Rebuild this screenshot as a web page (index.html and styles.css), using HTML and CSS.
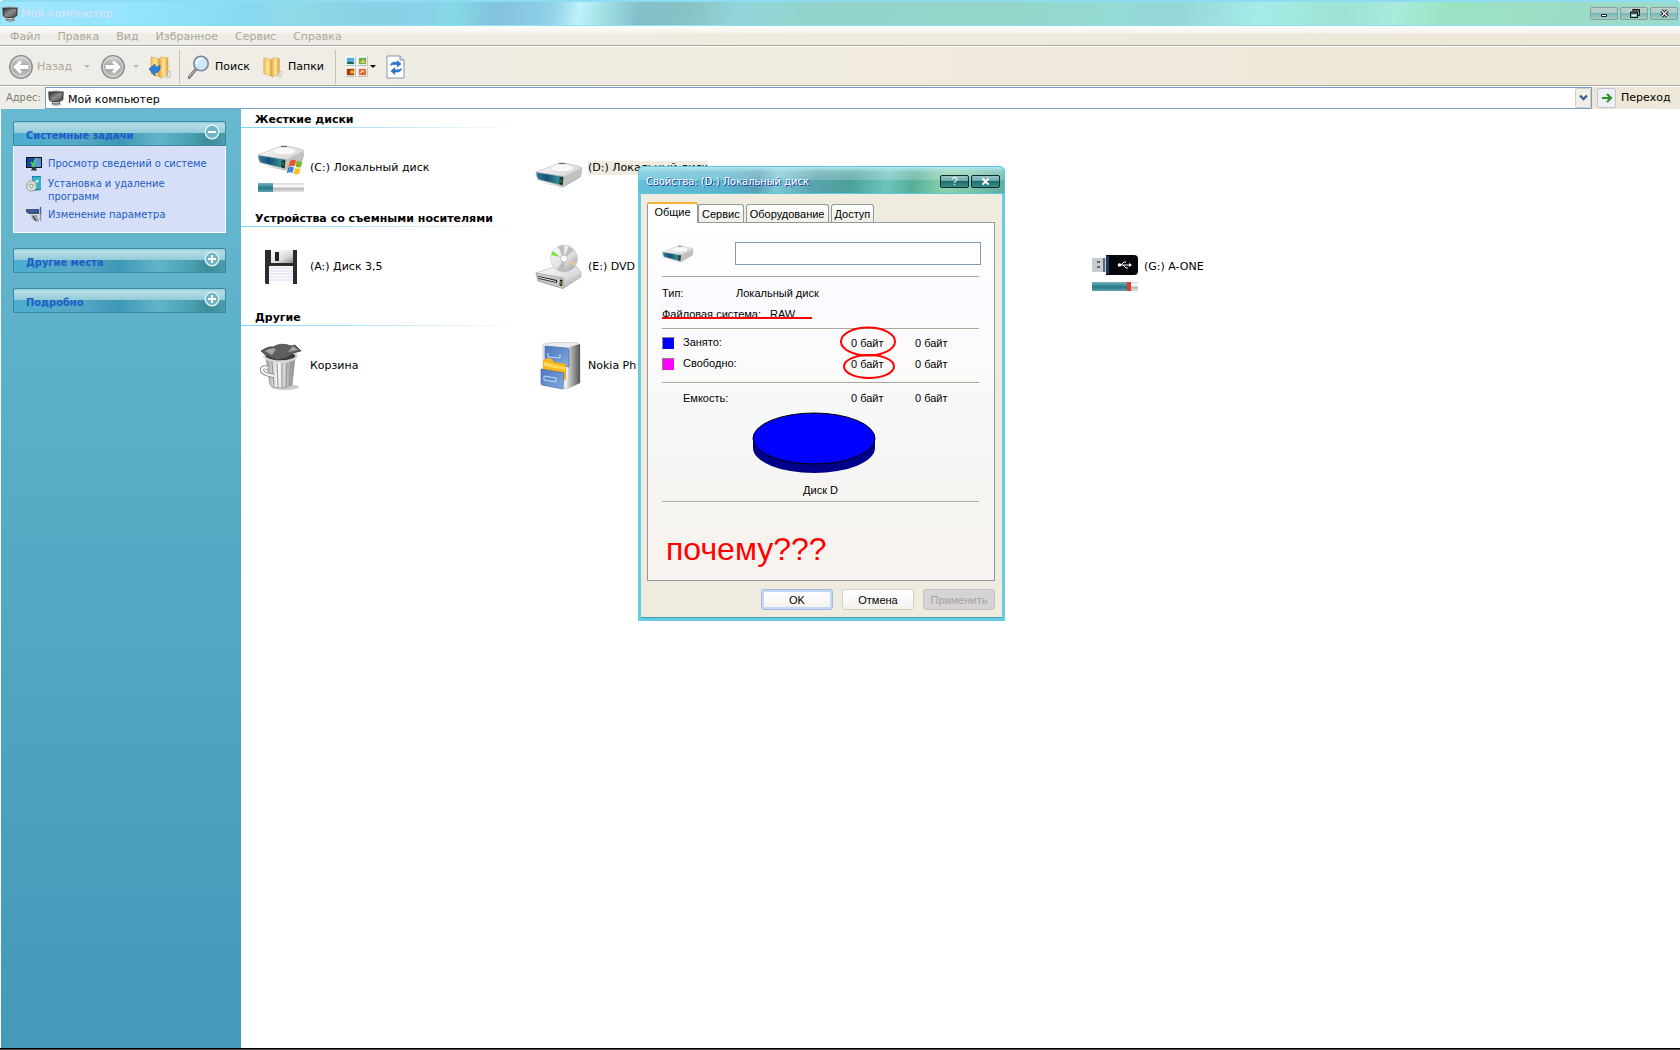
FILE: index.html
```html
<!DOCTYPE html>
<html lang="ru">
<head>
<meta charset="utf-8">
<title>Мой компьютер</title>
<link rel="stylesheet" href="styles.css">
</head>
<body>
<svg class="defs" aria-hidden="true">
  <defs>
    <linearGradient id="metal" x1="0" y1="0" x2="1" y2="1"><stop offset="0" stop-color="#fff"/><stop offset=".6" stop-color="#dcdcdc"/><stop offset="1" stop-color="#8e8e8e"/></linearGradient>
    <linearGradient id="front" x1="0" y1="0" x2="1" y2="0"><stop offset="0" stop-color="#2e7f96"/><stop offset=".4" stop-color="#174f78"/><stop offset=".8" stop-color="#2f8f90"/><stop offset="1" stop-color="#123"/></linearGradient>
    <linearGradient id="gold" x1="0" y1="0" x2="1" y2="0"><stop offset="0" stop-color="#f0bc55"/><stop offset=".5" stop-color="#fde59a"/><stop offset="1" stop-color="#dda239"/></linearGradient>
    <linearGradient id="grayball" x1="0" y1="0" x2="0" y2="1"><stop offset="0" stop-color="#d8d8d8"/><stop offset=".5" stop-color="#a2a2a2"/><stop offset="1" stop-color="#c4c4c4"/></linearGradient>
    <linearGradient id="dark" x1="0" y1="0" x2="1" y2="1"><stop offset="0" stop-color="#2c2c2c"/><stop offset=".5" stop-color="#8c8c8c"/><stop offset="1" stop-color="#3c3c3c"/></linearGradient>
    <linearGradient id="blue" x1="0" y1="0" x2="1" y2="1"><stop offset="0" stop-color="#4a76bd"/><stop offset="1" stop-color="#86abdf"/></linearGradient>
    <linearGradient id="side" x1="0" y1="0" x2="1" y2="0"><stop offset="0" stop-color="#ddd"/><stop offset="1" stop-color="#555"/></linearGradient>
    <linearGradient id="can" x1="0" y1="0" x2="1" y2="0"><stop offset="0" stop-color="#9a9a9a"/><stop offset=".4" stop-color="#fff"/><stop offset="1" stop-color="#8a8a8a"/></linearGradient>
    <symbol id="pc" viewBox="0 0 16 16"><path d="M.5 1.500q7-1 15 0L15 10 11.500 12 12.500 14.500 8 15.500 4 14.500 4.500 12.500 1 10.500z" fill="#c9c9c9" stroke="#777" stroke-width=".6"/><path d="M1 2.500q7-1 14 0L14.500 9.500 11 11.500H4.500L1.500 9.500z" fill="url(#dark)" stroke="#222" stroke-width=".8"/><path d="M4 13.500q4 1 8 0" stroke="#666" fill="none"/></symbol>
    <symbol id="drive" viewBox="0 0 48 28"><path d="M4 21l24 5.500L46 16v-3L26 25z" fill="#777" opacity=".5"/><path d="M1 11L22 3Q26 1 30 2L45 5.500Q47 6 46.500 8V13L28 25 3 18.500z" fill="url(#metal)" stroke="#b5b5b5" stroke-width=".6"/><path d="M1 11L29 15.500 28 25 3 18.500Q1 15 1 11z" fill="url(#front)" stroke="#ccc" stroke-width=".8"/><path d="M25 17l2.500.5-.5 6-2.500-.6z" fill="#111"/><path d="M26 18v4" stroke="#7be04a" stroke-width=".8"/><path d="M29 15.500L46.500 7v6L28 25z" fill="#c2c2c2"/><ellipse cx="27" cy="7" rx="12" ry="4" fill="#f8f8f8" stroke="#d2d2d2" stroke-width=".7"/><path d="M24 2.500h6" stroke="#666"/></symbol>
    <symbol id="ball" viewBox="0 0 24 24"><circle cx="12" cy="12" r="11.300" fill="url(#grayball)" stroke="#8b8b8b" stroke-width="1.200"/><circle cx="12" cy="12" r="9.500" fill="none" stroke="#dedede"/><path d="M4 12l7-6.500 2 2L10.500 10H19.500v4H10.500L13 16.500l-2 2z" fill="#fff"/></symbol>
    <symbol id="folder" viewBox="0 0 24 24"><path d="M3 2l9 2v18l-9-3z" fill="url(#gold)" stroke="#d5a444" stroke-width=".6"/><path d="M12 4l1-2 7 1v17l-8 3z" fill="url(#gold)" stroke="#d5a444" stroke-width=".6"/><path d="M20 16l3 1-1 5-3 1z" fill="#e8e8e0" stroke="#aaa" stroke-width=".6"/></symbol>
    <symbol id="plus" viewBox="0 0 16 16"><circle cx="8" cy="8" r="6.800" fill="#70b4c6" stroke="#e4f5f8" stroke-width="1.300"/><path d="M4 8h8M8 4v8" stroke="#fff" stroke-width="2"/></symbol>
    <symbol id="minus" viewBox="0 0 16 16"><circle cx="8" cy="8" r="6.800" fill="#70b4c6" stroke="#e4f5f8" stroke-width="1.300"/><path d="M4 8h8" stroke="#fff" stroke-width="2"/></symbol>
  </defs>
</svg>

<header class="titlebar">
  <svg class="i16"><use href="#pc"/></svg>
  <h1 class="titlebar-text">Мой компьютер</h1>
  <div class="winbtns">
    <button class="winbtn" aria-label="Свернуть"><svg width="13" height="11"><path d="M3.500 6.500h5v2h-5z" fill="#fff" stroke="#222"/></svg></button>
    <button class="winbtn" aria-label="Восстановить"><svg width="13" height="11"><path d="M4.500 2.500v-1h7v6h-2M2.500 4h7v5.500h-7zM2.500 5h7M4.500 3h7" fill="none" stroke="#111"/><path d="M4 7.500h4" stroke="#fff"/></svg></button>
    <button class="winbtn" aria-label="Закрыть"><svg width="13" height="11"><path d="M3.500 2.500l6 6M9.500 2.500l-6 6" stroke="#222" stroke-width="3.400"/><path d="M3.500 2.500l6 6M9.500 2.500l-6 6" stroke="#fff" stroke-width="1.200"/></svg></button>
  </div>
</header>

<nav class="menubar">
  <button>Файл</button><button>Правка</button><button>Вид</button><button>Избранное</button><button>Сервис</button><button>Справка</button>
</nav>

<div class="toolbar">
  <button class="tool back" disabled><svg class="i24"><use href="#ball"/></svg>Назад</button>
  <button class="drop drop-wide" disabled aria-label="Журнал назад"><span class="tri"></span></button>
  <button class="tool" disabled aria-label="Вперед"><svg class="i24 flip"><use href="#ball"/></svg></button>
  <button class="drop drop-mid" disabled aria-label="Журнал вперед"><span class="tri"></span></button>
  <button class="tool" aria-label="Вверх"><svg class="i24" viewBox="0 0 24 24"><use href="#folder" x="1" width="24" height="24"/><path d="M2 14l6-5v3q4 0 5-2 1 7-5 8v3z" fill="#2f80d8" stroke="#1c5cab" stroke-width=".7"/></svg></button>
  <span class="sep"></span>
  <button class="tool search"><svg class="i22" viewBox="0 0 22 24"><path d="M1 22.500l7.500-9" stroke="#777" stroke-width="3" stroke-linecap="round"/><path d="M1 22l7-8" stroke="#ccc" stroke-width="1"/><circle cx="13" cy="8.500" r="7.200" fill="#cfe7fb" stroke="#7c8694" stroke-width="1.600"/><path d="M8.500 9q0-5 5-5.500" stroke="#fff" stroke-width="2" fill="none"/></svg>Поиск</button>
  <button class="tool folders"><svg class="i22"><use href="#folder"/></svg>Папки</button>
  <span class="sep"></span>
  <button class="tool" aria-label="Вид"><svg class="i24" viewBox="0 0 24 24"><g stroke="#fff" stroke-width="1.500"><path d="M2 2h9v8H2z" fill="#5aa7dc"/><path d="M14 2h9v8h-9z" fill="#6cae55"/><path d="M2 13h9v8H2z" fill="#a33a12"/><path d="M14 13h9v8h-9z" fill="#d96a3a"/></g><path d="M3 7.500l3-1 4 1V9H3z" fill="#1c6a54"/><path d="M16 8l3-4 3 4z" fill="#e6ce4b"/><circle cx="8" cy="17" r="2" fill="#f2a420"/><path d="M15 19l3-4 3 1z" fill="#f5d5a0"/><path d="M1.500 10.500h10v-9M13.500 10.500h10v-9M1.500 21.500h10v-9M13.500 21.500h10v-9" fill="none" stroke="#aaa" stroke-width=".7"/></svg></button>
  <button class="drop drop-small" aria-label="Выбор вида"><span class="tri tri-on"></span></button>
  <button class="tool refresh" aria-label="Обновить"><svg width="20" height="24" viewBox="0 0 20 24"><path d="M1 1h13l4 4v18H1z" fill="#fff" stroke="#8795ab"/><path d="M14 1v4h4" fill="#dde6f2" stroke="#8795ab"/><path d="M4 11q1-5 7-4V5l4.500 4L11 12.500v-2.500q-4-1-7 1z" fill="#2b78d0"/><path d="M16 13q-1 5-7 4.500v2.500L4.500 16 9 12v2.500q4 .5 7-1.500z" fill="#2b78d0"/></svg></button>
</div>

<form class="address">
  <label for="addr">Адрес:</label>
  <div class="addrbox">
    <svg class="i16"><use href="#pc"/></svg>
    <input id="addr" type="text" value="Мой компьютер">
    <button type="button" class="combo" aria-label="Список адресов"><svg width="9" height="8"><path d="M1 1.500l3.500 3.500L8 1.500" fill="none" stroke="#40608c" stroke-width="2.400"/></svg></button>
  </div>
  <button type="button" class="go"><span class="goicon"><svg width="12" height="12"><path d="M1 6h9M6 2l4 4-4 4" fill="none" stroke="#2b9427" stroke-width="2.200"/></svg></span>Переход</button>
</form>

<main class="content">
  <aside class="side">
    <section class="group">
      <button class="group-head">Системные задачи<svg class="i16"><use href="#minus"/></svg></button>
      <ul class="group-body">
        <li><a href="#info"><svg class="i16" viewBox="0 0 16 16"><path d="M0 1h16v11H0z" fill="#111"/><path d="M1 2h14v9H1z" fill="#1746a8"/><path d="M9 2h6v9H5z" fill="#5d8ce0"/><path d="M5 14.500h6l-1-2.500H6z" fill="#333"/><path d="M5 6l2.500 4L10 2" fill="none" stroke="#42d73f" stroke-width="1.800"/></svg>Просмотр сведений о системе</a></li>
        <li><a href="#programs"><svg class="i16" viewBox="0 0 16 16"><path d="M6 0h9v14l-8 1z" fill="#17829d"/><path d="M7 1h8v12H7z" fill="#35b3c7"/><path d="M9 6l3-2-1 3" stroke="#fff" fill="none"/><circle cx="5.500" cy="10" r="5.200" fill="#ddd" stroke="#888" stroke-width=".7"/><path d="M5 5v10M1 9h9" stroke="#b9dcae" stroke-width="1.300"/><circle cx="5.500" cy="10" r="1.600" fill="#fff" stroke="#777" stroke-width=".7"/></svg>Установка и удаление программ</a></li>
        <li><a href="#settings"><svg class="i16" viewBox="0 0 16 16"><path d="M0 2h13v5H3L0 5z" fill="#46505e"/><path d="M2 3h9v2H2z" fill="#315fc4"/><path d="M5 8h6l2 6-2 1-5-3z" fill="#9ba3ad"/><path d="M14.500 0v8" stroke="#2c67c4" stroke-width="1.500"/><path d="M14.500 7v7" stroke="#999" stroke-width="1.500"/><path d="M7 9l3 5" stroke="#222"/></svg>Изменение параметра</a></li>
      </ul>
    </section>
    <section class="group"><button class="group-head">Другие места<svg class="i16"><use href="#plus"/></svg></button></section>
    <section class="group"><button class="group-head">Подробно<svg class="i16"><use href="#plus"/></svg></button></section>
  </aside>

  <div class="files">
    <section>
      <h2>Жесткие диски</h2>
      <div class="row">
        <div class="item"><div class="pic"><svg width="48" height="32" viewBox="0 0 48 32"><use href="#drive" width="48" height="28"/><path d="M33 17q3-2 6-.5l-1.500 6q-3-1.500-6 .5z" fill="#ea5b2a"/><path d="M40 17q3 1.500 5.500 0l-1.500 6q-3 1-5.500-.5z" fill="#77b82c"/><path d="M31 24q3-2 6-.5L35.500 29q-3-1.500-6 .5z" fill="#3f83dc"/><path d="M38 24q3 1.500 5.500 0L42 30q-3 1-5.500-.5z" fill="#f6c51b"/></svg><div class="meter"><i style="width:33%"></i></div></div><span>(C:) Локальный диск</span></div>
        <div class="item"><div class="pic pic-low"><svg width="48" height="28"><use href="#drive"/></svg></div><span class="sel">(D:) Локальный диск</span></div>
      </div>
    </section>
    <section>
      <h2>Устройства со съемными носителями</h2>
      <div class="row">
        <div class="item"><div class="pic"><svg width="48" height="36" viewBox="0 0 48 36"><path d="M8 1h32v34H9l-1-1z" fill="#2c2c2c"/><path d="M14 1h22v13H14z" fill="url(#metal)"/><path d="M18 3h4v9h-4z" fill="#222"/><path d="M12 17h24v18H12z" fill="#fafaff"/><path d="M12 19h24M12 22h24M12 25h24M12 28h24M12 31h24" stroke="#dcdcf0"/></svg></div><span>(A:) Диск 3,5</span></div>
        <div class="item"><div class="pic"><svg width="48" height="46" viewBox="0 0 48 46"><path d="M1 29L22 22l20 1 4 5v5L28 44.500 3 37z" fill="url(#metal)" stroke="#aaa" stroke-width=".6"/><path d="M1 29l28 5-1 10.500L3 37z" fill="#c6c6c6" stroke="#999" stroke-width=".6"/><path d="M3 32l19 4v3L4 35z" fill="#222"/><path d="M4 33.500l17 4" stroke="#eee"/><path d="M25 35.500l2.500.5-.5 6-2.500-.6z" fill="#111"/><path d="M26 37v3.500" stroke="#7be04a"/><circle cx="29" cy="14.500" r="13.500" fill="url(#metal)" stroke="#c8c8c8" stroke-width=".6"/><path d="M29 15L23 2.500l6-1.500zM29 15l10-9-5-4zM29 15l-7 11 8 2z" fill="#bcbcbc"/><path d="M25 13l-9-2 2-4z" fill="#7ee03c"/><path d="M33 17l8.500 2-2 3z" fill="#f1c98d"/><circle cx="29" cy="14.500" r="3.500" fill="#fff" stroke="#c2c2c2"/></svg></div><span>(E:) DVD</span></div>
        <div class="item"></div>
        <div class="item"><div class="pic usb"><svg width="48" height="20" viewBox="0 0 48 20"><path d="M1 3h14v14H1z" fill="#c3ced0"/><path d="M6 6h3v2H6zM6 11h3v2H6z" fill="#666"/><path d="M12 3h2v14h-2z" fill="#667"/><path d="M15 0h28q4 0 4 4v12q0 4-4 4H15z" fill="#05070d"/><path d="M15 1h3v18h-3z" fill="#1f3763"/><path d="M28 10h11M30 10l3-3h2M32 10l3 3h2" stroke="#fff" fill="none"/><circle cx="28.500" cy="10" r="1.800" fill="#fff"/><path d="M38 8l3 2-3 2z" fill="#fff"/></svg><div class="meter"><i style="width:75%"></i><b></b></div></div><span>(G:) A-ONE</span></div>
      </div>
    </section>
    <section>
      <h2>Другие</h2>
      <div class="row">
        <div class="item"><div class="pic"><svg width="48" height="48" viewBox="0 0 48 48"><ellipse cx="28" cy="45" rx="14" ry="3" fill="#ccc"/><path d="M9 15l4 28q10 6 22 0l3-28z" fill="url(#can)" stroke="#888" stroke-width=".7"/><path d="M15 20l2 23M20 21l1 24M25 21v24M30 21l-1 24M34 20l-2 23" stroke="#999" stroke-width="1.200"/><ellipse cx="23.500" cy="14" rx="16" ry="5.500" fill="#3b3b3b" stroke="#d4d4d4" stroke-width="2.400"/><path d="M4 9q8-5 12-4 8-5 18-1l4-1 6 6-8 2-6 5-10 2-10-4z" fill="#5e5e5e" stroke="#333" stroke-width=".7"/><path d="M8 9q7-4 11-2l-4 6zM31 10l5-6 5 4z" fill="#a5a5a5"/><path d="M11 26q-6-2-6 2t12 6" fill="none" stroke="#777" stroke-width="4"/><path d="M11 26q-6-2-6 2t12 6" fill="none" stroke="#f4f4f4" stroke-width="2.600"/></svg></div><span>Корзина</span></div>
        <div class="item"><div class="pic"><svg width="48" height="48" viewBox="0 0 48 48"><path d="M8 2q15-3 34-1 2 0 3 2v38L32 47 8 43z" fill="#ececec" stroke="#bbb" stroke-width=".6"/><path d="M34 5l11-3v39L32 47z" fill="url(#side)"/><path d="M10 4l22 2q2 0 2 2v17L10 20z" fill="url(#blue)" stroke="#3a62a3" stroke-width=".6"/><path d="M13 11v4l12 1v-4" fill="none" stroke="#c5d9f5"/><path d="M8 19l4-3 5 1 2 3 12 2v16l-23-5z" fill="#f6b51d"/><path d="M9 20l21 5v3L9 24z" fill="#ffd85a"/><path d="M6 27l23 4-1 16-21-4q-1 0-1-2z" fill="url(#blue)" stroke="#3a62a3" stroke-width=".6"/><path d="M9 34v4l12 2v-4z" fill="none" stroke="#c5d9f5"/></svg></div><span>Nokia Ph</span></div>
      </div>
    </section>
  </div>
</main>
<footer class="bottom"></footer>

<section class="dialog" role="dialog" aria-labelledby="dt">
  <header class="dlg-title">
    <h2 id="dt">Свойства: (D:) Локальный диск</h2>
    <button class="dlgbtn" aria-label="Справка">?</button>
    <button class="dlgbtn" aria-label="Закрыть"><svg width="11" height="9"><path d="M2.500 1.500l6 6M8.500 1.500l-6 6" stroke="#fff" stroke-width="2"/></svg></button>
  </header>
  <div class="dlg-body">
    <div class="tabs" role="tablist">
      <button class="tab on" role="tab">Общие</button><button class="tab" role="tab">Сервис</button><button class="tab" role="tab">Оборудование</button><button class="tab" role="tab">Доступ</button>
    </div>
    <div class="panel">
      <div class="volume"><svg width="32" height="20" viewBox="0 0 48 28"><use href="#drive" width="48" height="28"/></svg><input type="text" aria-label="Метка тома"></div>
      <hr>
      <dl class="info"><dt>Тип:</dt><dd>Локальный диск</dd></dl>
      <dl class="info fs"><dt>Файловая система:</dt><dd>RAW</dd></dl>
      <hr>
      <table class="sizes">
        <tr><th><i class="sw used"></i>Занято:</th><td>0 байт</td><td>0 байт</td></tr>
        <tr><th><i class="sw free"></i>Свободно:</th><td>0 байт</td><td>0 байт</td></tr>
      </table>
      <hr>
      <table class="sizes total">
        <tr><th>Емкость:</th><td>0 байт</td><td>0 байт</td></tr>
      </table>
      <figure class="pie">
        <svg width="124" height="62" viewBox="0 0 124 62"><path d="M1 26v10a61 25 0 0 0 122 0V26z" fill="#00008b"/><ellipse cx="62" cy="26.500" rx="61" ry="25.500" fill="#00f" stroke="#000"/></svg>
        <figcaption>Диск D</figcaption>
      </figure>
      <hr>
      <p class="note">почему???</p>
      <svg class="marks" viewBox="0 0 346 357"><path d="M14 95h150"/><ellipse cx="220" cy="118.500" rx="27" ry="14"/><ellipse cx="221" cy="143.500" rx="25" ry="11.500"/></svg>
    </div>
    <div class="actions"><button class="btn ok">OK</button><button class="btn">Отмена</button><button class="btn" disabled>Применить</button></div>
  </div>
</section>
</body>
</html>
```
FILE: styles.css
```css
* { box-sizing: border-box; }
body {
  margin: 0;
  min-height: 100vh;
  display: flex;
  flex-direction: column;
  background: #fff;
  color: #000;
  font: 11px/14px "DejaVu Sans", Verdana, sans-serif;
}
button, input { font: inherit; color: inherit; margin: 0; padding: 0; border: 0; background: none; }
h1, h2, p, ul, dl, dd, figure { margin: 0; padding: 0; }
svg { flex: none; display: block; }
.defs { position: absolute; width: 0; height: 0; }
.i16 { width: 16px; height: 16px; }
.i22 { width: 22px; height: 24px; }
.i24 { width: 24px; height: 24px; }
.flip { transform: scaleX(-1); }

/* window caption */
.titlebar {
  height: 26px;
  display: flex;
  align-items: center;
  gap: 3px;
  padding: 0 1px;
  border: 1px solid #8ce2f2;
  border-top: 2px solid #8edcf2;
  border-radius: 4px 4px 0 0;
  background: linear-gradient(100deg, #a0e6fa 0%, #95e4ff 8%, #88d8f2 15%, #90dbe9 17%, #88d0e4 22%, #8ad0e6 25%, #86dae8 27%, #82c2da 29.500%, #8ccde6 32%, #92d4e8 33%, #bff2fb 34.500%, #9fdfe4 36%, #84c0cb 38%, #88c2c4 41%, #92d6dc 44%, #92d4cb 48%, #93d5c8 60%, #94dbd5 66%, #93d6d6 70%, #a5ece8 75%, #9ce3d2 80%, #a9ebdc 83%, #9be3c4 86%, #9cdcc5 93%, #98dccd 100%);
}
.titlebar-text { flex: 1; font-size: 11px; font-weight: 400; color: #dfe2fb; }
.winbtns { display: flex; gap: 2px; }
.winbtn {
  width: 28px;
  height: 13px;
  display: grid;
  place-items: center;
  border: 1px solid #8f9b99;
  border-radius: 2px;
  background: linear-gradient(#bcd0cd, #a8cdc8 45%, #7cb6b8 50%, #9ccec6);
}

.menubar {
  height: 21px;
  display: flex;
  align-items: center;
  gap: 17px;
  padding: 1px 10px 0;
  color: #aca899;
  border-bottom: 1px solid #fff;
  background: linear-gradient(#a9a99f, #a9a99f) bottom / 100% 1px no-repeat, linear-gradient(#fff, #f4f3ee 7px, transparent 8px), linear-gradient(90deg, #eeede8, #efebde 50%, #eee6d6);
}

.toolbar {
  height: 40px;
  display: flex;
  align-items: center;
  padding: 0 9px;
  border-bottom: 1px solid #fff;
  background: linear-gradient(#a9a99f, #a9a99f) bottom / 100% 1px no-repeat, linear-gradient(90deg, #eeede8, #efebde 50%, #eee6d6);
}
.tool { display: flex; align-items: center; gap: 4px; white-space: nowrap; }
.tool:disabled { color: #aca899; }
.back { width: 64px; }
.search { width: 73px; gap: 5px; }
.folders { width: 66px; gap: 5px; }
.refresh { margin-left: 8px; }
.drop { display: grid; place-items: center; height: 24px; }
.drop-wide { width: 28px; }
.drop-mid { width: 22px; }
.drop-small { width: 10px; }
.tri { border: 3px solid transparent; border-top-color: #b9b6aa; border-bottom: 0; }
.tri-on { border-top-color: #000; }
.sep { width: 1px; height: 34px; margin: 0 8px; background: #c9c4ac; }

.address {
  height: 22px;
  display: flex;
  padding-left: 6px;
  background: linear-gradient(90deg, #eeede8, #efebde 50%, #eee6d6);
}
.address label { width: 39px; line-height: 22px; color: #7d7b74; font-family: "DejaVu Sans Condensed", "DejaVu Sans", sans-serif; }
.addrbox { flex: 1; display: flex; align-items: center; gap: 4px; padding-left: 2px; background: #fff; border: 1px solid #7a9fc4; }
.addrbox input { flex: 1; height: 20px; padding-top: 2px; outline: 0; }
.combo { width: 16px; height: 20px; display: grid; place-items: center; border: 1px solid #d3d0cb; border-radius: 2px; background: #f1efe6; }
.go { display: flex; align-items: center; gap: 5px; width: 88px; padding-left: 5px; }
.goicon { width: 19px; height: 20px; display: grid; place-items: center; border: 1px solid #c3c4cc; border-radius: 2px; background: #eef0f8; }

.content { flex: 1; display: flex; padding-left: 1px; }
.bottom { height: 2px; background: #4a4647; border-top: 1px solid #000; }

/* task pane */
.side {
  width: 240px;
  flex: none;
  display: flex;
  flex-direction: column;
  gap: 15px;
  padding: 12px 15px 0 12px;
  background: linear-gradient(#66b9cf, #4498b8);
  font-family: "DejaVu Sans Condensed", "DejaVu Sans", sans-serif;
}
.group-head {
  width: 100%;
  height: 25px;
  display: flex;
  justify-content: space-between;
  padding: 2px 5px 0 12px;
  line-height: 24px;
  font-weight: 700;
  color: #215dc6;
  border: 1px solid #3a8aa6;
  border-radius: 2px 2px 0 0;
  background: linear-gradient(#8cc8d8, #b4dfe8 10%, #94ccd8 46%, transparent 47%), linear-gradient(90deg, #4eaed0, #56a9c6 30%, #3d98b6 50%, #62b4cc 68%, #49a0ae 84%, #3c8c9c 92%, #4b9cae);
}
.group-body { height: 87px; margin: 0; padding: 10px 12px; display: flex; flex-direction: column; gap: 4px; list-style: none; border: 1px solid #fff; border-top: 0; background: #d6dff7; }
.group-body a { display: flex; gap: 6px; line-height: 13px; padding-top: 1px; color: #215dc6; text-decoration: none; }
.group-body li { padding-right: 12px; }
.group-body li:nth-child(1) { padding-right: 0; white-space: nowrap; }
.group-body svg { margin-top: -1px; }

/* file list */
.files { flex: 1; min-width: 0; }
.files h2 { height: 19px; padding-left: 14px; font-size: 11px; line-height: 22px; background: linear-gradient(90deg, #7fd2f5, #bfe6f8 140px, #fff 280px) bottom / 100% 1px no-repeat; }
.row { display: flex; height: 80px; padding: 16px 16px; }
.item { width: 278px; height: 48px; display: flex; align-items: center; gap: 5px; }
.pic { width: 48px; height: 48px; display: flex; flex-direction: column; align-items: center; justify-content: center; }
.pic-low { justify-content: flex-end; padding-bottom: 3px; }
.pic .meter { margin-top: 7px; }
.usb { padding-top: 11px; }
.meter { width: 46px; height: 9px; flex: none; display: flex; background: linear-gradient(#dcdcdc, #fff 45%, #b4b4b4 55%, #e2e2e2); }
.meter i { background: linear-gradient(#7cb4bd, #2f8494 45%, #2b7c8c 60%, #5da5b0); }
.meter b { width: 4px; background: #e23c2d; }
.sel { background: #efebe0; }

/* properties window */
.dialog {
  position: absolute;
  left: 638px;
  top: 166px;
  width: 367px;
  border: 3px solid #68cbdf;
  border-top: 0;
  border-radius: 6px 6px 0 0;
  box-shadow: inset 0 -1px #3f9bb8;
  background: #efebde;
  font: 11px/14px "Liberation Sans", Arial, sans-serif;
}
.dlg-title {
  height: 28px;
  display: flex;
  align-items: center;
  gap: 2px;
  margin: 0 -3px;
  padding: 3px 4px 0 7px;
  border: 1px solid #5cc6da;
  border-radius: 6px 6px 0 0;
  background: linear-gradient(#b0e8f0, #ffffff48 5px, #ffffff30 50%, transparent 52%), linear-gradient(100deg, #62c0d8, #58b4cc 25%, #5a9fb8 33%, #7cc8d8 38%, #58a4ac 48%, #4ca09c 58%, #6cc4bc 68%, #56ae98 75%, #8cd4b0 84%, #5cb0a0);
}
.dlg-title h2 { flex: 1; font: 11px/14px "DejaVu Sans Condensed", sans-serif; color: #fff; text-shadow: 1px 1px #1a36a0; }
.dlgbtn { width: 29px; height: 13px; display: grid; place-items: center; color: #fff; line-height: 11px; border: 1px solid #0b2b30; border-radius: 2px; background: linear-gradient(#9cc4c8, #6ba8a8 45%, #1c6c70 50%, #3d9088); }
.dlg-body { padding: 8px 7px 8px 6px; }
.tabs { display: flex; align-items: flex-end; gap: 2px; height: 20px; }
.tab { height: 18px; padding: 0 3px; border: 1px solid #919b9c; border-bottom: 0; border-radius: 3px 3px 0 0; background: linear-gradient(#fff, #f0eee6); position: relative; }
.tab.on { height: 21px; width: 51px; margin: 0 -2px -1px 0; padding-bottom: 3px; border-top: 2px solid #f5b335; background: #fff; z-index: 1; }
.panel {
  position: relative;
  height: 359px;
  padding: 19px 13px 0 14px;
  border: 1px solid #919b9c;
  background: linear-gradient(#fff, #fdfaff 25%, #fbfaf9 40%, #f6f7f8 55%, #f6f4f0 80%, #f6f3ee);
}
.panel hr { height: 2px; margin: 0 2px 0 0; border: 0; border-top: 1px solid #aca899; border-bottom: 1px solid #fff; }
.volume { display: flex; justify-content: space-between; align-items: center; height: 34px; padding-bottom: 11px; }
.volume input { width: 246px; height: 23px; border: 1px solid #7f9db9; background: #fff; }
.info { display: flex; height: 20px; line-height: 20px; }
.info dt { width: 74px; white-space: nowrap; }
hr + .info { margin-top: 5px; }
.fs { height: 25px; line-height: 22px; }
.fs dt { width: 108px; }
.sizes { width: 317px; border-spacing: 0; margin: 2px 0 8px; table-layout: fixed; }
.sizes tr { height: 21px; }
.sizes th { width: 189px; padding: 0; font-weight: 400; text-align: left; }
.sizes td { width: 64px; padding: 0; }
.total { margin: 3px 0 4px; }
.total th { padding-left: 21px; }
.sw { display: inline-block; width: 13px; height: 13px; margin-right: 8px; vertical-align: middle; border: 1px solid; border-color: #8a8778 #fff #fff #8a8778; }
.used { background: #00f; }
.free { background: #f0f; }
.pie { display: flex; flex-direction: column; align-items: center; gap: 9px; height: 89px; }
.pie svg { margin-right: 16px; }
.pie figcaption { margin-right: 2px; }
.note { padding: 28px 4px; color: red; font-size: 32px; line-height: 36px; }
.marks { position: absolute; inset: 0; width: 100%; fill: none; stroke: #f00; stroke-width: 2; }
.actions { display: flex; justify-content: flex-end; gap: 9px; padding-top: 8px; }
.btn { width: 72px; height: 21px; border: 1px solid #d3d0cb; border-radius: 3px; background: linear-gradient(#fff, #fbfaf8 50%, #f1f0ea); }
.btn:disabled { color: #a5a298; border-color: #c4c3c8; background: #d5d3d6; }
.ok { border-color: #a3b9e0; box-shadow: inset 0 0 0 2px #c3d8f9; }
```
